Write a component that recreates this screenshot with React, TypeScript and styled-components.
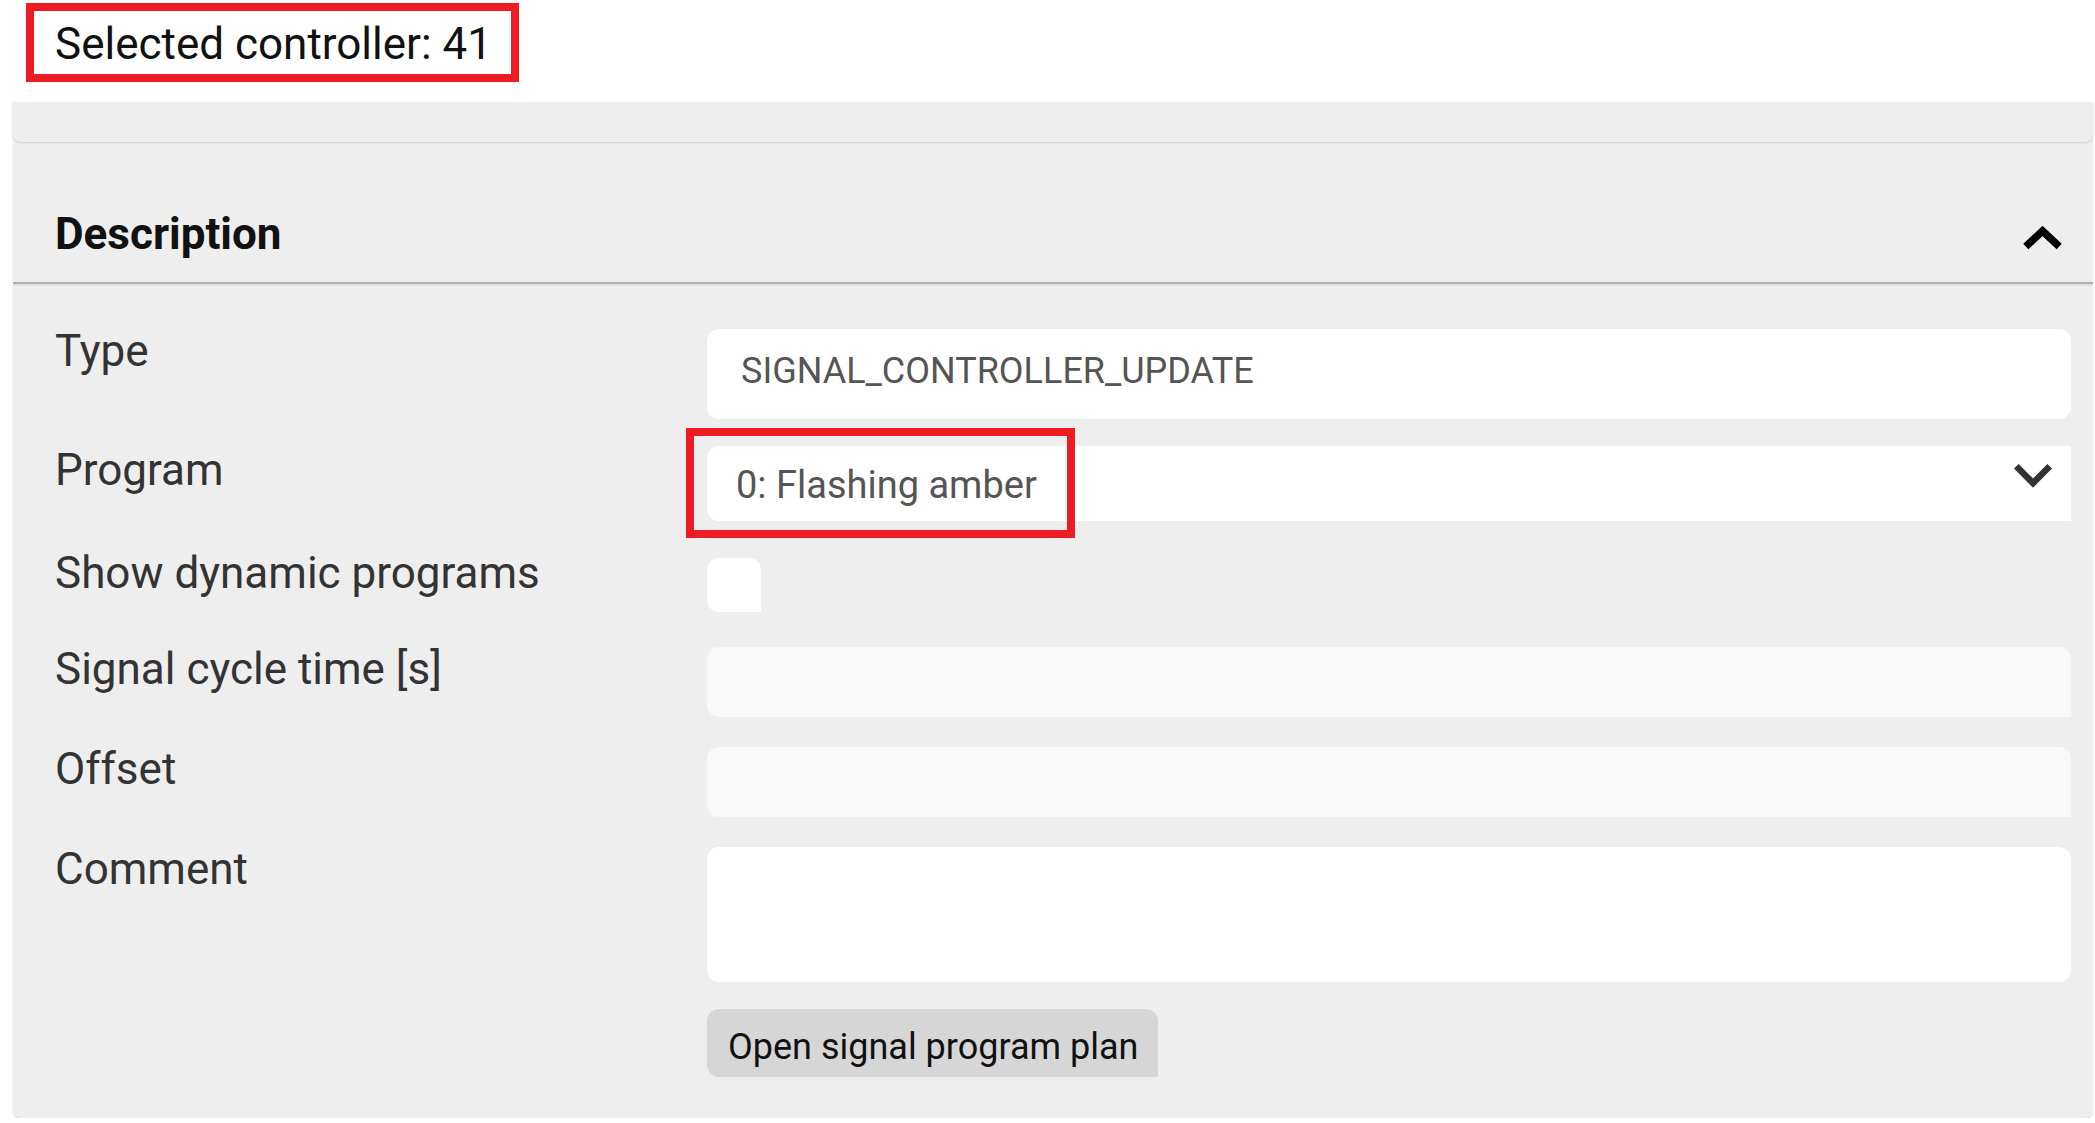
import React from "react";
import styled, { createGlobalStyle } from "styled-components";

const GlobalStyle = createGlobalStyle`
  html, body {
    margin: 0;
    padding: 0;
    background: #ffffff;
  }
  body {
    font-family: Roboto, "Liberation Sans", Arial, sans-serif;
    color: #333333;
  }
  * { box-sizing: border-box; }
`;

const Page = styled.div`
  width: 2095px;
  padding-top: 3px;
`;

const SelectedTitle = styled.div`
  width: fit-content;
  margin-left: 26px;
  border: 8px solid #ed1c24;
  height: 79px;
  padding: 3px 19px 0 21px;
  font-size: 44px;
  line-height: 60px;
  color: #111111;
  background: #ffffff;
  white-space: nowrap;
`;

const Panel = styled.div`
  margin: 20px 0 0 13px;
  width: 2080px;
  background: #eeeeee;
  border-radius: 0 0 8px 8px;
  box-shadow: 0 2px 1px -1px rgba(0, 0, 0, 0.12), 0 1px 3px rgba(0, 0, 0, 0.1);
`;

const TopStrip = styled.div`
  height: 40px;
  background: #eeeeee;
  border-radius: 0 0 8px 8px;
  box-shadow: 0 1px 2px rgba(0, 0, 0, 0.12);
  position: relative;
`;

const AccordionHeader = styled.div`
  display: flex;
  align-items: flex-start;
  justify-content: space-between;
  padding: 70px 31px 26px 28px;
  border-bottom: 2px solid #aeaeae;
  box-shadow: 0 2px 0 #dedede;
`;

const HeaderTitle = styled.h2`
  margin: 0;
  padding-left: 14px;
  font-size: 44px;
  line-height: 44px;
  font-weight: 700;
  color: #111111;
`;

const ChevronUp = styled.svg`
  display: block;
  margin-top: 14px;
  overflow: visible;
`;

const Body = styled.div`
  padding: 45px 22px 41px 42px;
`;

const FormRow = styled.div<{ $mb?: number }>`
  display: grid;
  grid-template-columns: 652px 1fr;
  align-items: start;
  margin-bottom: ${(p) => p.$mb ?? 0}px;
`;

const Label = styled.div<{ $shift?: number }>`
  font-size: 44px;
  line-height: 44px;
  color: #333333;
  margin-top: ${(p) => p.$shift ?? 0}px;
  white-space: nowrap;
`;

const TextInput = styled.input<{ $h: number; $disabled?: boolean; $radius?: string }>`
  display: block;
  width: 100%;
  height: ${(p) => p.$h}px;
  border: none;
  outline: none;
  border-radius: ${(p) => p.$radius ?? "12px"};
  background: ${(p) => (p.$disabled ? "#f8f8f8" : "#ffffff")};
  padding: 0 34px 6px 34px;
  font-family: inherit;
  font-size: 36px;
  color: #555555;
`;

const CommentArea = styled.textarea`
  display: block;
  width: 100%;
  height: 135px;
  border: none;
  outline: none;
  resize: none;
  border-radius: 12px;
  background: #ffffff;
  padding: 20px 34px;
  font-family: inherit;
  font-size: 36px;
  color: #555555;
`;

const SelectWrap = styled.div`
  position: relative;
`;

const SelectBox = styled.div`
  display: flex;
  justify-content: space-between;
  align-items: flex-start;
  height: 75px;
  background: #ffffff;
  border-radius: 12px 0 0 12px;
  padding: 0 19px 0 29px;
`;

const SelectValue = styled.span`
  margin-top: 4px;
  font-size: 38px;
  line-height: 71px;
  color: #555555;
  white-space: nowrap;
`;

const ChevronDown = styled.svg`
  display: block;
  margin-top: 18px;
  overflow: visible;
`;

const Highlight = styled.div`
  position: absolute;
  left: -21px;
  top: -18px;
  width: 389px;
  height: 110px;
  border: 8px solid #ed1c24;
  pointer-events: none;
`;

const CheckBox = styled.div`
  width: 54px;
  height: 54px;
  background: #ffffff;
  border-radius: 12px 12px 0 12px;
`;

const ActionButton = styled.button`
  height: 68px;
  border: none;
  border-radius: 12px 12px 0 12px;
  background: #d6d6d6;
  padding: 8px 20px 0 21px;
  font-family: inherit;
  font-size: 36px;
  color: #111111;
  cursor: pointer;
  white-space: nowrap;
`;

export default function App() {
  return (
    <>
      <GlobalStyle />
      <Page>
        <SelectedTitle>Selected controller: 41</SelectedTitle>
        <Panel>
          <TopStrip />
          <AccordionHeader>
            <HeaderTitle>Description</HeaderTitle>
            <ChevronUp width="39" height="23" viewBox="0 0 39 23">
              <polyline
                points="2.8,20.6 19.5,5 36.2,20.6"
                fill="none"
                stroke="#000000"
                strokeWidth="7.5"
                strokeLinecap="butt"
                strokeLinejoin="miter"
              />
            </ChevronUp>
          </AccordionHeader>
          <Body>
            <FormRow $mb={27}>
              <Label>Type</Label>
              <TextInput $h={90} readOnly value="SIGNAL_CONTROLLER_UPDATE" />
            </FormRow>
            <FormRow $mb={37}>
              <Label $shift={2}>Program</Label>
              <SelectWrap>
                <SelectBox>
                  <SelectValue>0: Flashing amber</SelectValue>
                  <ChevronDown width="38" height="24" viewBox="0 0 38 24">
                    <polyline
                      points="2.3,2.3 19,19.2 35.7,2.3"
                      fill="none"
                      stroke="#333333"
                      strokeWidth="6.5"
                      strokeLinecap="butt"
                      strokeLinejoin="miter"
                    />
                  </ChevronDown>
                </SelectBox>
                <Highlight />
              </SelectWrap>
            </FormRow>
            <FormRow $mb={35}>
              <Label $shift={-7}>Show dynamic programs</Label>
              <CheckBox role="checkbox" aria-checked="false" />
            </FormRow>
            <FormRow $mb={30}>
              <Label>Signal cycle time [s]</Label>
              <TextInput $h={70} $disabled $radius="12px 12px 0 12px" readOnly value="" />
            </FormRow>
            <FormRow $mb={30}>
              <Label>Offset</Label>
              <TextInput $h={70} $disabled $radius="12px 12px 0 12px" readOnly value="" />
            </FormRow>
            <FormRow $mb={27}>
              <Label>Comment</Label>
              <CommentArea readOnly value="" />
            </FormRow>
            <FormRow>
              <div />
              <div>
                <ActionButton type="button">Open signal program plan</ActionButton>
              </div>
            </FormRow>
          </Body>
        </Panel>
      </Page>
    </>
  );
}
